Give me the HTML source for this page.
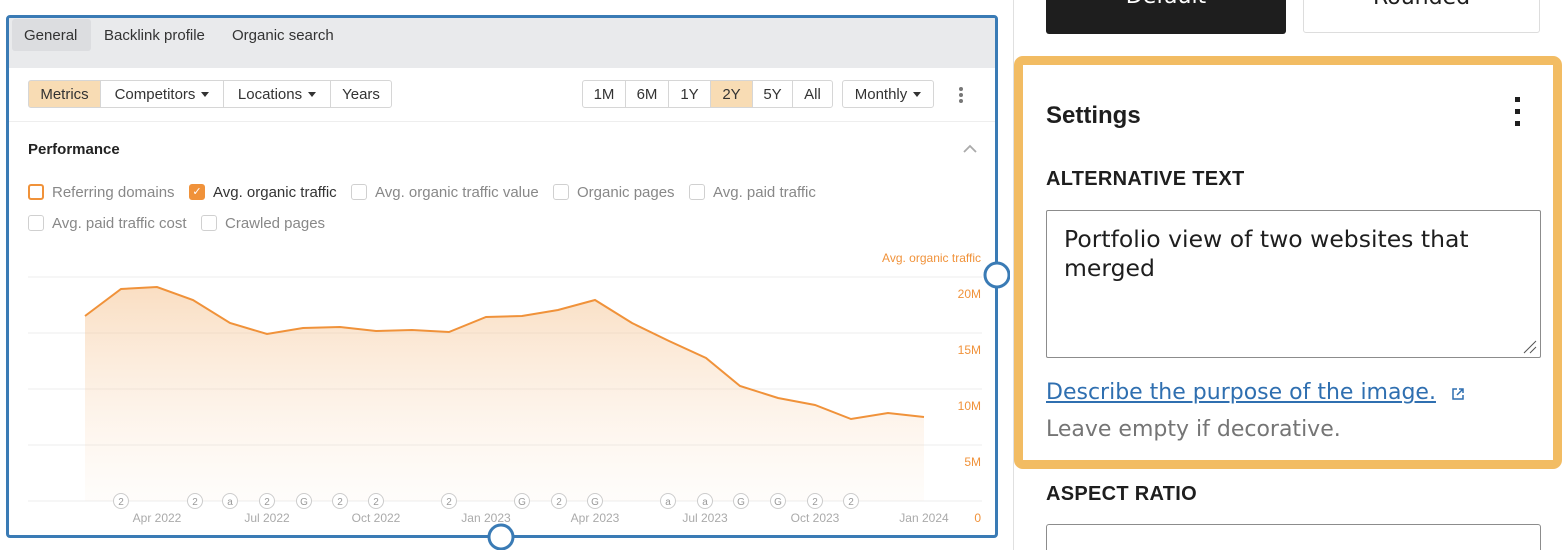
<!DOCTYPE html>
<html><head><style>
*{box-sizing:border-box;margin:0;padding:0}
html,body{width:1562px;height:550px;overflow:hidden}
body{background:#fff;font-family:"Liberation Sans",Arial,sans-serif;position:relative;color:#333}
.abs{position:absolute}
.btn{position:absolute;top:80px;height:28px;border:1px solid #d6d6d6;font-size:15px;line-height:28px;color:#333;text-align:center;background:#fff}
.tri{display:inline-block;width:0;height:0;border-left:4px solid transparent;border-right:4px solid transparent;border-top:5px solid #333;vertical-align:2px;margin-left:6px}
.cb{position:absolute;left:0;top:0;width:16px;height:16px;border:1px solid #d0d0d0;border-radius:3px}
.opt{position:absolute;font-size:15px;color:#888;padding-left:24px;line-height:18px;height:18px}
.sans2{font-family:"DejaVu Sans","Liberation Sans",sans-serif}
</style></head><body>
<div class="abs" style="left:6px;top:15px;width:992px;height:523px;border:3px solid #3a7bb5;border-radius:4px;overflow:hidden">
 <div class="abs" style="left:0;top:0;width:986px;height:50px;background:#e9eaec"></div>
 <div class="abs" style="left:3px;top:1px;width:79px;height:32px;background:#dcdde0;border-radius:3px"></div>
 <div class="abs" style="left:15px;top:9px;font-size:15px;color:#333">General</div>
 <div class="abs" style="left:95px;top:9px;font-size:15px;color:#333">Backlink profile</div>
 <div class="abs" style="left:223px;top:9px;font-size:15px;color:#333">Organic search</div>
 <div class="abs" style="left:0;top:103px;width:986px;height:1px;background:#eee"></div>
</div>
<div class="btn" style="left:28px;width:73px;background:#f8dcb4;border-radius:3px 0 0 3px">Metrics</div>
<div class="btn" style="left:100px;width:124px">Competitors<span class="tri"></span></div>
<div class="btn" style="left:223px;width:108px">Locations<span class="tri"></span></div>
<div class="btn" style="left:330px;width:62px;border-radius:0 3px 3px 0">Years</div>
<div class="btn" style="left:582px;width:44px;border-radius:3px 0 0 3px">1M</div>
<div class="btn" style="left:625px;width:44px">6M</div>
<div class="btn" style="left:668px;width:43px">1Y</div>
<div class="btn" style="left:710px;width:43px;background:#f8dcb4">2Y</div>
<div class="btn" style="left:752px;width:41px">5Y</div>
<div class="btn" style="left:792px;width:41px;border-radius:0 3px 3px 0">All</div>
<div class="btn" style="left:842px;width:92px;border-radius:3px">Monthly<span class="tri"></span></div>
<div class="abs" style="left:959px;top:87px;width:4px;height:4px;border-radius:2px;background:#777;box-shadow:0 6px 0 #777,0 12px 0 #777"></div>
<div class="abs" style="left:28px;top:141px;font-size:15px;font-weight:bold;color:#222">Performance</div>
<svg class="abs" style="left:962px;top:143px" width="16" height="12"><path d="M2 9 L8 3 L14 9" fill="none" stroke="#aaa" stroke-width="1.8"/></svg>
<div class="opt" style="left:28px;top:184px"><span class="cb" style="border:2px solid #f0923a"></span>Referring domains</div>
<div class="opt" style="left:189px;top:184px;color:#333"><span class="cb" style="background:#f0923a;border-color:#f0923a;color:#fff;font-size:11px;line-height:14px;text-align:center">✓</span>Avg. organic traffic</div>
<div class="opt" style="left:351px;top:184px"><span class="cb"></span>Avg. organic traffic value</div>
<div class="opt" style="left:553px;top:184px"><span class="cb"></span>Organic pages</div>
<div class="opt" style="left:689px;top:184px"><span class="cb"></span>Avg. paid traffic</div>
<div class="opt" style="left:28px;top:215px"><span class="cb"></span>Avg. paid traffic cost</div>
<div class="opt" style="left:201px;top:215px"><span class="cb"></span>Crawled pages</div>
<svg class="abs" style="left:0;top:0" width="1010" height="550">
<defs><linearGradient id="g" x1="0" y1="0" x2="0" y2="1"><stop offset="0" stop-color="#f6c89a" stop-opacity="0.6"/><stop offset="1" stop-color="#fbe6d2" stop-opacity="0.1"/></linearGradient></defs>
<g stroke="#ececec" stroke-width="1"><line x1="28" y1="277" x2="982" y2="277"/><line x1="28" y1="333" x2="982" y2="333"/><line x1="28" y1="389" x2="982" y2="389"/><line x1="28" y1="445" x2="982" y2="445"/><line x1="28" y1="501" x2="982" y2="501"/></g>
<path d="M85 316 L121 289 L157 287 L193 300 L230 323 L267 334 L303 328 L340 327 L376 331 L412 330 L449 332 L486 317 L522 316 L558 310 L595 300 L632 323 L669 341 L706 358 L740 386 L778 398 L815 405 L851 419 L888 413 L924 417 L924 501 L85 501Z" fill="url(#g)"/>
<path d="M85 316 L121 289 L157 287 L193 300 L230 323 L267 334 L303 328 L340 327 L376 331 L412 330 L449 332 L486 317 L522 316 L558 310 L595 300 L632 323 L669 341 L706 358 L740 386 L778 398 L815 405 L851 419 L888 413 L924 417" fill="none" stroke="#f0923a" stroke-width="2"/>
<g font-family="Liberation Sans" font-size="12" fill="#f0923a" text-anchor="end"><text x="981" y="262">Avg. organic traffic</text><text x="981" y="298">20M</text><text x="981" y="354">15M</text><text x="981" y="410">10M</text><text x="981" y="466">5M</text><text x="981" y="522">0</text></g>
<g font-family="Liberation Sans" font-size="12" fill="#aaa" text-anchor="middle"><text x="157" y="522">Apr 2022</text><text x="267" y="522">Jul 2022</text><text x="376" y="522">Oct 2022</text><text x="486" y="522">Jan 2023</text><text x="595" y="522">Apr 2023</text><text x="705" y="522">Jul 2023</text><text x="815" y="522">Oct 2023</text><text x="924" y="522">Jan 2024</text></g>
<g font-family="Liberation Sans" font-size="10" fill="#999" text-anchor="middle" stroke-width="1">
<g fill="#fff" stroke="#ccc"><circle cx="121" cy="501" r="7.5"/><circle cx="195" cy="501" r="7.5"/><circle cx="230" cy="501" r="7.5"/><circle cx="267" cy="501" r="7.5"/><circle cx="304" cy="501" r="7.5"/><circle cx="340" cy="501" r="7.5"/><circle cx="376" cy="501" r="7.5"/><circle cx="449" cy="501" r="7.5"/><circle cx="522" cy="501" r="7.5"/><circle cx="559" cy="501" r="7.5"/><circle cx="595" cy="501" r="7.5"/><circle cx="668" cy="501" r="7.5"/><circle cx="705" cy="501" r="7.5"/><circle cx="741" cy="501" r="7.5"/><circle cx="778" cy="501" r="7.5"/><circle cx="815" cy="501" r="7.5"/><circle cx="851" cy="501" r="7.5"/></g>
<text x="121" y="505">2</text><text x="195" y="505">2</text><text x="230" y="505">a</text><text x="267" y="505">2</text><text x="304" y="505">G</text><text x="340" y="505">2</text><text x="376" y="505">2</text><text x="449" y="505">2</text><text x="522" y="505">G</text><text x="559" y="505">2</text><text x="595" y="505">G</text><text x="668" y="505">a</text><text x="705" y="505">a</text><text x="741" y="505">G</text><text x="778" y="505">G</text><text x="815" y="505">2</text><text x="851" y="505">2</text></g>
<circle cx="997" cy="275" r="12" fill="#fff" stroke="#3a7bb5" stroke-width="3"/>
<circle cx="501" cy="537" r="12" fill="#fff" stroke="#3a7bb5" stroke-width="3"/>
</svg>
<div class="abs" style="left:1013px;top:0;width:1px;height:550px;background:#e0e0e0"></div>
<div class="abs sans2" style="left:1046px;top:-20px;width:240px;height:54px;background:#1e1e1e;border-radius:3px;color:#fff;font-size:22px;text-align:center;line-height:34px">Default</div>
<div class="abs sans2" style="left:1303px;top:-20px;width:237px;height:53px;border:1px solid #ddd;border-radius:3px;color:#1e1e1e;font-size:22px;text-align:center;line-height:34px">Rounded</div>
<div class="abs" style="left:1014px;top:56px;width:548px;height:413px;border:9px solid #f2bc63;border-radius:9px"></div>
<div class="abs" style="left:1046px;top:102px;font-size:24px;font-weight:bold;color:#1e1e1e">Settings</div>
<div class="abs" style="left:1515px;top:97px;width:5px;height:5px;background:#1e1e1e;box-shadow:0 12px 0 #1e1e1e,0 24px 0 #1e1e1e"></div>
<div class="abs" style="left:1046px;top:168px;font-size:20px;font-weight:bold;color:#1e1e1e;letter-spacing:0.3px">ALTERNATIVE TEXT</div>
<div class="abs" style="left:1046px;top:210px;width:495px;height:148px;border:1px solid #8c8c8c;border-radius:2px"></div>
<div class="abs sans2" style="left:1064px;top:225px;font-size:23.5px;line-height:29px;color:#1e1e1e;width:470px">Portfolio view of two websites that merged</div>
<svg class="abs" style="left:1522px;top:339px" width="16" height="16"><path d="M2 14 L14 2 M8 14 L14 8" stroke="#555" stroke-width="1"/></svg>
<div class="abs sans2" style="left:1046px;top:380px;font-size:22px;color:#2f6fb0;text-decoration:underline;white-space:nowrap">Describe the purpose of the image.</div>
<svg class="abs" style="left:1450px;top:386px" width="16" height="16"><path d="M7 3 H3 V13 H13 V9 M9 3 H13 V7 M13 3 L7 9" fill="none" stroke="#2f6fb0" stroke-width="1.5"/></svg>
<div class="abs sans2" style="left:1046px;top:417px;font-size:22px;color:#757575;white-space:nowrap">Leave empty if decorative.</div>
<div class="abs" style="left:1046px;top:483px;font-size:20px;font-weight:bold;color:#1e1e1e;letter-spacing:0.3px">ASPECT RATIO</div>
<div class="abs" style="left:1046px;top:524px;width:495px;height:40px;border:1px solid #8c8c8c;border-radius:3px"></div>
</body></html>
